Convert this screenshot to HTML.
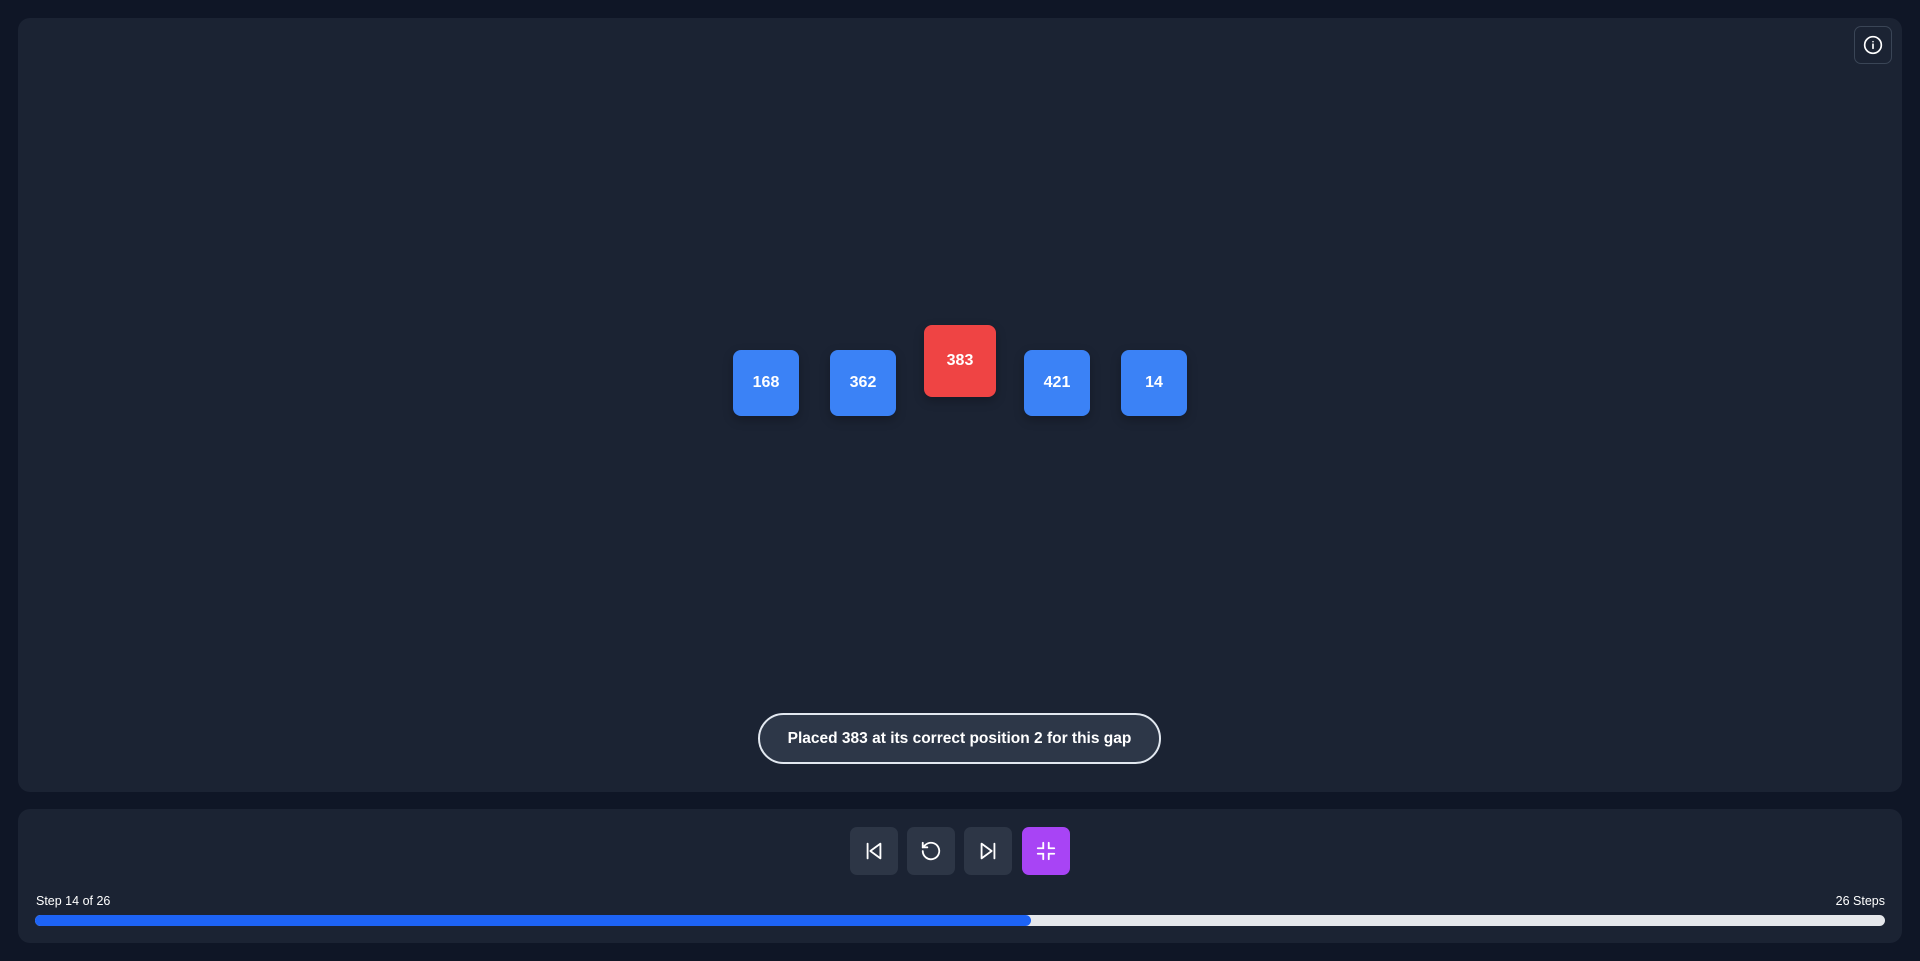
<!DOCTYPE html>
<html><head><style>
*{margin:0;padding:0;box-sizing:border-box}
body{width:1920px;height:961px;background:#0f1626;font-family:"Liberation Sans",sans-serif;position:relative;overflow:hidden}
.main{position:absolute;left:18px;top:18px;width:1884px;height:774px;background:#1b2333;border-radius:12px}
.bot{position:absolute;left:18px;top:809px;width:1884px;height:134px;background:#1b2333;border-radius:12px}
.tile{position:absolute;width:66px;height:66px;border-radius:8px;background:#3b82f6;color:#fff;font-weight:bold;font-size:16px;display:flex;align-items:center;justify-content:center;box-shadow:0 4px 10px rgba(0,0,0,.25)}
.info{position:absolute;left:1854px;top:26px;width:38px;height:38px;border:1px solid #3a4556;border-radius:7px;display:flex;align-items:center;justify-content:center}
.pill{position:absolute;left:758px;top:713px;width:403px;height:51px;border:2px solid #e2e8f0;border-radius:26px;background:#2d3748;color:#fff;font-weight:bold;font-size:15.5px;display:flex;align-items:center;justify-content:center}
.btn{position:absolute;top:827px;width:48px;height:48px;border-radius:7px;background:#2d3646;display:flex;align-items:center;justify-content:center}
.lbl{position:absolute;color:#fff;font-size:12.5px;top:894px}
</style></head><body>
<div class="main"></div>
<div class="info"><svg width="20" height="20" viewBox="0 0 24 24" fill="none" stroke="#fff" stroke-width="2" stroke-linecap="round"><circle cx="12" cy="12" r="10"/><path d="M12 16v-5M12 8h.01"/></svg></div>
<div class="tile" style="left:733px;top:350px">168</div>
<div class="tile" style="left:830px;top:350px">362</div>
<div class="tile" style="left:924px;top:325px;width:72px;height:72px;background:#ef4444">383</div>
<div class="tile" style="left:1024px;top:350px">421</div>
<div class="tile" style="left:1121px;top:350px">14</div>
<div class="pill">Placed 383 at its correct position 2 for this gap</div>
<div class="bot"></div>
<div class="btn" style="left:850px"><svg width="22" height="22" viewBox="0 0 24 24" fill="none" stroke="#fff" stroke-width="2" stroke-linecap="round" stroke-linejoin="round"><path d="M5 4v16M19 4L8 12l11 8z"/></svg></div>
<div class="btn" style="left:907px"><svg width="22" height="22" viewBox="0 0 24 24" fill="none" stroke="#fff" stroke-width="2" stroke-linecap="round" stroke-linejoin="round"><path d="M3 12a9 9 0 1 0 3-6.7L3 8"/><path d="M3 3v5h5"/></svg></div>
<div class="btn" style="left:964px"><svg width="22" height="22" viewBox="0 0 24 24" fill="none" stroke="#fff" stroke-width="2" stroke-linecap="round" stroke-linejoin="round"><path d="M19 4v16M5 4l11 8-11 8z"/></svg></div>
<div class="btn" style="left:1022px;background:#a844f5"><svg width="22" height="22" viewBox="0 0 24 24" fill="none" stroke="#fff" stroke-width="2" stroke-linecap="round"><path d="M9 3v6H3M15 3v6h6M9 21v-6H3M15 21v-6h6"/></svg></div>
<div class="lbl" style="left:36px">Step 14 of 26</div>
<div class="lbl" style="right:35px">26 Steps</div>
<div style="position:absolute;left:35px;top:915px;width:1850px;height:11px;border-radius:6px;background:#e5e7eb"></div>
<div style="position:absolute;left:35px;top:915px;width:996px;height:11px;border-radius:6px;background:#1d63f5"></div>
</body></html>
